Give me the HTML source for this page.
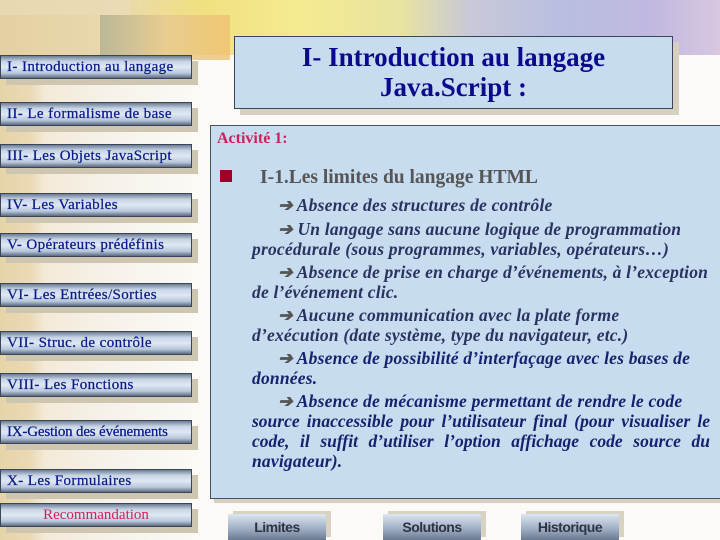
<!DOCTYPE html>
<html><head><meta charset="utf-8"><style>
*{margin:0;padding:0;box-sizing:border-box}
body{width:720px;height:540px;position:relative;overflow:hidden;background:#fbfaf6;font-family:"Liberation Serif",serif}
.a{position:absolute}
.btn{position:absolute;left:0;width:192px;height:24px;border:1px solid #3a4658;background:linear-gradient(#6c7c94 0%,#c9d6e6 25%,#dfe8f3 50%,#b9c8dc 78%,#5c6a80 100%);color:#0a1a8a;font-size:15px;letter-spacing:0.4px;line-height:22px;padding-left:6px;box-shadow:6px 6px 0 #cfc6b2;white-space:nowrap;-webkit-text-stroke:0.25px #0a1a8a}
.t{position:absolute;left:252px;width:458px;font-style:italic;font-weight:bold;font-size:17.5px;letter-spacing:0.2px;line-height:20px;color:#16226e;white-space:nowrap}
.j{text-align:justify;text-align-last:justify}
.ar{color:#555}
.bb{position:absolute;top:514px;height:26px;width:98px;background:linear-gradient(#dde6f0,#9cabc0 60%,#6b7a90);color:#2b3344;font-family:"Liberation Sans",sans-serif;font-weight:bold;font-size:14px;text-align:center;line-height:26px;box-shadow:5px -3px 0 #d8d2c2;letter-spacing:-0.5px}
</style></head><body>
<div class="a" style="left:0;top:0;width:720px;height:540px;background:linear-gradient(90deg,#e6d4a8 0,#ead9b4 30px,#f3ead8 45px,#f6f2ea 110px,#fbfaf6 200px)"></div>
<div class="a" style="left:0;top:0;width:720px;height:55px;background:linear-gradient(90deg,#e4d0a2 0,#ead9ae 120px,#f0e080 200px,#f5ea90 300px,#e8e4a0 400px,#c8c8d8 470px,#b8bfe0 560px,#c0b8e0 650px,#d8c8e0 720px)"></div>
<div class="a" style="left:100px;top:15px;width:130px;height:45px;background:linear-gradient(90deg,#b0b090,#e6c890,#f0c070);opacity:.8"></div>
<div class="a" style="left:0;top:0;width:130px;height:15px;background:#eadbb8;opacity:.7"></div>

<div class="btn" style="top:55px">I- Introduction au langage</div>
<div class="btn" style="top:102px">II- Le formalisme de base</div>
<div class="btn" style="top:144px">III- Les Objets JavaScript</div>
<div class="btn" style="top:193px">IV- Les Variables</div>
<div class="btn" style="top:233px">V- Opérateurs prédéfinis</div>
<div class="btn" style="top:283px">VI- Les Entrées/Sorties</div>
<div class="btn" style="top:331px">VII- Struc. de contrôle</div>
<div class="btn" style="top:373px">VIII- Les Fonctions</div>
<div class="btn" style="top:420px;letter-spacing:-0.2px">IX-Gestion des événements</div>
<div class="btn" style="top:469px">X- Les Formulaires</div>
<div class="btn" style="top:503px;color:#d0205a;text-align:center;padding-left:0;-webkit-text-stroke:0;letter-spacing:0">Recommandation</div>

<div class="a" style="left:234px;top:36px;width:439px;height:73px;background:#c8dcf0;border:1px solid #3a4658;box-shadow:6px 6px 0 #d6d0c0;color:#0a0a8c;font-size:27px;font-weight:bold;line-height:30px;text-align:center;padding-top:5px">I- Introduction au langage<br>Java.Script :</div>

<div class="a" style="left:210px;top:125px;width:515px;height:374px;background:#c8dcf0;border:1px solid #4a5262;box-shadow:4px 4px 0 #d6d0c0"></div>
<div class="a" style="left:217px;top:130px;color:#d0205a;font-weight:bold;font-size:16px">Activité 1:</div>
<div class="a" style="left:220px;top:170px;width:12px;height:12px;background:#a00028"></div>
<div class="a" style="left:260px;top:167px;color:#555;font-weight:bold;font-size:19.5px">I-1.Les limites du langage HTML</div>

<div class="t" style="top:195px;color:#2a3260"><span style="padding-left:26px" class="ar">➔</span> Absence des structures de contrôle</div>
<div class="t" style="top:219px;color:#2a3260"><span style="padding-left:26px" class="ar">➔</span> Un langage sans aucune logique de programmation</div>
<div class="t" style="top:239px;color:#2a3260">procédurale (sous programmes, variables, opérateurs…)</div>
<div class="t" style="top:262px;color:#2a3260"><span style="padding-left:26px" class="ar">➔</span> Absence de prise en charge d’événements, à l’exception</div>
<div class="t" style="top:282px;color:#2a3260">de l’événement clic.</div>
<div class="t" style="top:305px;color:#2a3260"><span style="padding-left:26px" class="ar">➔</span> Aucune communication avec la plate forme</div>
<div class="t" style="top:325px;color:#2a3260">d’exécution (date système, type du navigateur, etc.)</div>
<div class="t" style="top:348px"><span style="padding-left:26px" class="ar">➔</span> Absence de possibilité d’interfaçage avec les bases de</div>
<div class="t" style="top:368px">données.</div>
<div class="t" style="top:391px"><span style="padding-left:26px" class="ar">➔</span> Absence de mécanisme permettant de rendre le code</div>
<div class="t j" style="top:411px;letter-spacing:0">source inaccessible pour l’utilisateur final (pour visualiser le</div>
<div class="t j" style="top:431px;letter-spacing:0">code, il suffit d’utiliser l’option affichage code source du</div>
<div class="t" style="top:451px">navigateur).</div>

<div class="bb" style="left:228px">Limites</div>
<div class="bb" style="left:383px">Solutions</div>
<div class="bb" style="left:521px">Historique</div>
</body></html>
